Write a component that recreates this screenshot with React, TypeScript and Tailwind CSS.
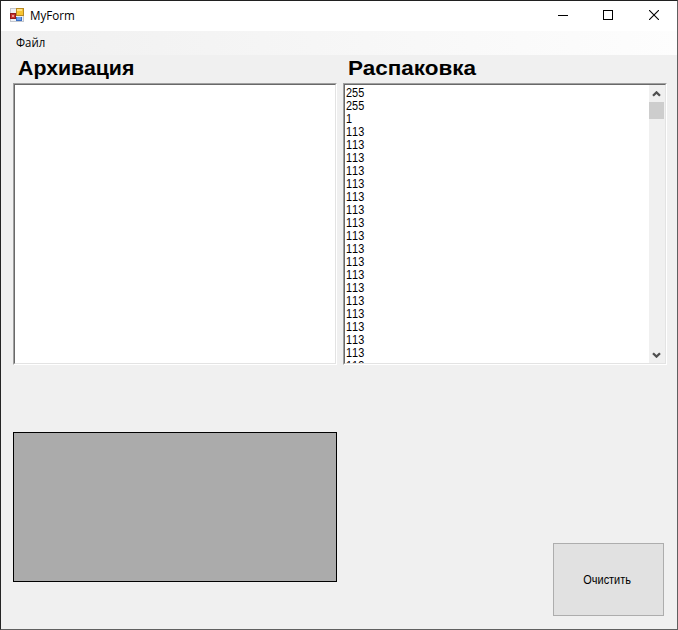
const values = ['255', '255', '1', ...Array.from({ length: 19 }, () => '113')];

function FormIcon() {
  return (
    <svg className="mb-[2px] shrink-0" width="14" height="14" viewBox="0 0 14 14" shapeRendering="crispEdges">
      <rect x="0.5" y="0.5" width="13" height="13" fill="#eef1f6" stroke="#c3c7ce" />
      <rect x="0" y="5" width="6" height="6" fill="#8f1c1c" />
      <rect x="1" y="6" width="4" height="4" fill="#c8302f" />
      <rect x="2" y="7" width="2" height="2" fill="#e89a94" />
      <rect x="6" y="0" width="8" height="8" fill="#b98a22" />
      <rect x="7" y="1" width="6" height="6" fill="#f7c433" />
      <rect x="7" y="1" width="5" height="2" fill="#ffe184" />
      <rect x="6" y="9" width="6" height="4" fill="#3c6fc4" />
      <rect x="7" y="9" width="4" height="3" fill="#6ea1ea" />
    </svg>
  );
}

function TitleBar() {
  return (
    <div className="flex h-[30px] items-center bg-white pl-[9px]">
      <FormIcon />
      <span className="ml-[6px] origin-left scale-x-[0.97] font-['Open_Sans',sans-serif] text-[12px] leading-4 text-black">
        MyForm
      </span>
      <div className="mr-[18px] mb-[2px] ml-auto flex items-center">
        <svg className="mr-[35px]" width="10" height="11" viewBox="0 0 10 11" shapeRendering="crispEdges">
          <path d="M0 5.5h10" stroke="#000" />
        </svg>
        <svg className="mr-[36px]" width="10" height="10" viewBox="0 0 10 10" shapeRendering="crispEdges">
          <rect x="0.5" y="0.5" width="9" height="9" fill="none" stroke="#000" />
        </svg>
        <svg width="10" height="10" viewBox="0 0 10 10">
          <path d="M0 0l10 10M10 0l-10 10" stroke="#000" strokeWidth="1.1" />
        </svg>
      </div>
    </div>
  );
}

function ScrollBar() {
  return (
    <div className="flex w-4 shrink-0 flex-col items-start bg-[#f0f0f0]">
      <svg className="mt-[6px] ml-[3px] shrink-0" width="9" height="6" viewBox="0 0 9 6">
        <path d="M1 4.8L4.5 1.4L8 4.8" fill="none" stroke="#505050" strokeWidth="2.3" />
      </svg>
      <div className="mt-[5px] h-[17px] w-[15px] bg-[#cdcdcd]" />
      <svg className="mt-auto mb-[5px] ml-[3px] shrink-0" width="9" height="6" viewBox="0 0 9 6">
        <path d="M1 1.2L4.5 4.6L8 1.2" fill="none" stroke="#505050" strokeWidth="2.3" />
      </svg>
    </div>
  );
}

const boxFrame =
  'h-[282px] border border-t-[#a0a0a0] border-l-[#a0a0a0] border-r-white border-b-white';
const boxInner =
  'flex h-full overflow-hidden border border-t-[#696969] border-l-[#696969] border-r-[#e3e3e3] border-b-[#e3e3e3] bg-white';

export default function App() {
  return (
    <div className="flex h-[630px] w-[678px] flex-col border border-t-[#202020] border-b-[#606060] border-l-[#252525] border-r-[#606060] bg-[#f0f0f0] font-['Liberation_Sans',sans-serif] text-black">
      <TitleBar />
      <div className="flex h-6 shrink-0 items-center bg-linear-to-r from-[#f0f0f0] to-[#fdfdfd] pl-[15px]">
        <span className="origin-left scale-x-[0.95] font-['Open_Sans',sans-serif] text-[12px] leading-4">Файл</span>
      </div>
      <div className="flex gap-[6px] pl-3">
        <section className="w-[324px]">
          <h1 className="flex h-7 pl-[5px]">
            <span className="origin-left scale-x-[1.015] text-[21px] leading-[26px] font-bold">Архивация</span>
          </h1>
          <div className={boxFrame}>
            <div className={boxInner} />
          </div>
        </section>
        <section className="w-[324px]">
          <h1 className="flex h-7 pl-[5px]">
            <span className="origin-left scale-x-[1.07] text-[21px] leading-[26px] font-bold">Распаковка</span>
          </h1>
          <div className={boxFrame}>
            <div className={boxInner}>
              <ul className="flex-1 pt-[2px] pl-[1px] text-[12px] leading-[13px] [font-kerning:none]">
                {values.map((value, index) => (
                  <li key={index} className="origin-left scale-x-[0.91]">
                    {value}
                  </li>
                ))}
              </ul>
              <ScrollBar />
            </div>
          </div>
        </section>
      </div>
      <div className="mt-[67px] flex items-start justify-between pr-[13px] pl-3">
        <div className="h-[150px] w-[324px] border border-black bg-[#ababab]" />
        <button className="mt-[111px] flex h-[73px] w-[111px] items-center justify-center border border-[#adadad] bg-[#e1e1e1] pr-[3px] text-[12px]">
          <span className="scale-x-[0.91]">Очистить</span>
        </button>
      </div>
    </div>
  );
}
